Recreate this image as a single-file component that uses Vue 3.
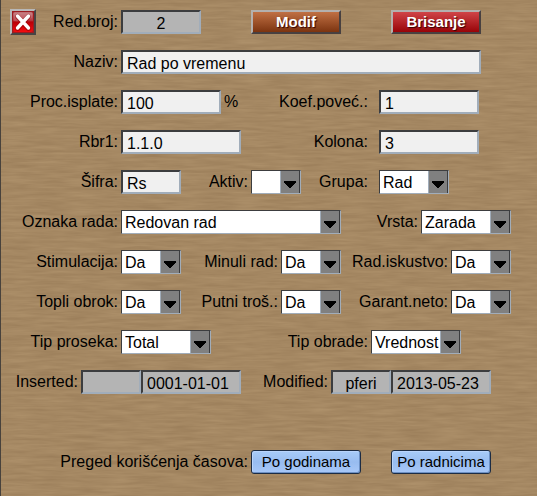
<script setup>
import { reactive } from 'vue'

const gap = (w) => ({ kind: 'gap', w })
const label = (w, text, target, wide = false) => ({ kind: 'label', w, text, target, wide })
const input = (w, id, extra = {}) => ({ kind: 'input', w, id, ...extra })
const select = (w, id, options) => ({ kind: 'select', w, id, options })
const button = (w, text, tone) => ({ kind: 'button', w, text, tone })

const values = reactive({
  redbroj: '2',
  naziv: 'Rad po vremenu',
  procenat: '100',
  koef: '1',
  rbr: '1.1.0',
  kolona: '3',
  sifra: 'Rs',
  aktiv: '',
  grupa: 'Rad',
  oznaka: 'Redovan rad',
  vrsta: 'Zarada',
  stimulacija: 'Da',
  minuli: 'Da',
  iskustvo: 'Da',
  topli: 'Da',
  putni: 'Da',
  garant: 'Da',
  prosek: 'Total',
  obrada: 'Vrednost',
  insertedBy: '',
  insertedOn: '0001-01-01',
  modifiedBy: 'pferi',
  modifiedOn: '2013-05-23'
})

const yesNo = ['Da', 'Ne']

// Cell widths are proportional shares of the row.
const rows = [
  [gap(10), { kind: 'close', w: 26 }, label(85, 'Red.broj:', 'redbroj'), input(80, 'redbroj', { locked: true, center: true }),
    gap(50), button(90, 'Modif', 'brown'), gap(50), button(90, 'Brisanje', 'red'), gap(56)],
  [label(121, 'Naziv:', 'naziv'), input(360, 'naziv'), gap(56)],
  [label(121, 'Proc.isplate:', 'procenat'), input(100, 'procenat'), { kind: 'unit', w: 30, text: '%' },
    label(128, 'Koef.poveć.:', 'koef', true), input(100, 'koef'), gap(58)],
  [label(121, 'Rbr1:', 'rbr'), input(120, 'rbr'), label(138, 'Kolona:', 'kolona', true), input(100, 'kolona'), gap(58)],
  [label(121, 'Šifra:', 'sifra'), input(60, 'sifra'), label(70, 'Aktiv:', 'aktiv'), select(50, 'aktiv', ['', ...yesNo]),
    label(78, 'Grupa:', 'grupa', true), select(70, 'grupa', ['Rad']), gap(88)],
  [label(121, 'Oznaka rada:', 'oznaka'), select(220, 'oznaka', ['Redovan rad']), label(80, 'Vrsta:', 'vrsta'),
    select(90, 'vrsta', ['Zarada']), gap(26)],
  [label(121, 'Stimulacija:', 'stimulacija'), select(60, 'stimulacija', yesNo), label(100, 'Minuli rad:', 'minuli'),
    select(60, 'minuli', yesNo), label(110, 'Rad.iskustvo:', 'iskustvo'), select(60, 'iskustvo', yesNo), gap(26)],
  [label(121, 'Topli obrok:', 'topli'), select(60, 'topli', yesNo), label(100, 'Putni troš.:', 'putni'),
    select(60, 'putni', yesNo), label(110, 'Garant.neto:', 'garant'), select(60, 'garant', yesNo), gap(26)],
  [label(121, 'Tip proseka:', 'prosek'), select(90, 'prosek', ['Total']), label(160, 'Tip obrade:', 'obrada'),
    select(90, 'obrada', ['Vrednost']), gap(76)],
  [label(81, 'Inserted:', 'insertedBy'), input(60, 'insertedBy', { locked: true, center: true }),
    input(100, 'insertedOn', { locked: true }), label(90, 'Modified:', 'modifiedBy'),
    input(60, 'modifiedBy', { locked: true, center: true }), input(100, 'modifiedOn', { locked: true }), gap(46)],
  [],
  [{ kind: 'caption', w: 251, text: 'Preged korišćenja časova:' }, button(110, 'Po godinama', 'blue'), gap(30),
    button(100, 'Po radnicima', 'blue'), gap(46)]
]
</script>

<template>
  <main class="panel">
    <svg class="wood" aria-hidden="true">
      <filter id="grain" x="0" y="0" width="100%" height="100%" color-interpolation-filters="sRGB">
        <feTurbulence type="fractalNoise" baseFrequency="0.03 0.34" numOctaves="3" seed="8" />
        <feColorMatrix
          values="0.09 0 0 0 0.600
                  0.09 0 0 0 0.486
                  0.08 0 0 0 0.345
                  0 0 0 0 1" />
      </filter>
      <rect width="100%" height="100%" filter="url(#grain)" />
    </svg>
    <form class="form" @submit.prevent>
      <div v-for="(row, r) in rows" :key="r" class="row">
        <div v-for="(cell, c) in row" :key="c" class="cell" :style="{ flexGrow: cell.w }">
          <label v-if="cell.kind === 'label'" class="text" :class="{ wide: cell.wide }" :for="cell.target">{{ cell.text }}</label>
          <span v-else-if="cell.kind === 'caption'" class="text">{{ cell.text }}</span>
          <span v-else-if="cell.kind === 'unit'" class="unit">{{ cell.text }}</span>
          <input
            v-else-if="cell.kind === 'input'"
            :id="cell.id"
            v-model="values[cell.id]"
            type="text"
            class="field"
            :class="{ locked: cell.locked, center: cell.center }"
            :readonly="cell.locked"
            :aria-label="cell.id === 'insertedOn' || cell.id === 'modifiedOn' ? cell.id : null" />
          <div v-else-if="cell.kind === 'select'" class="drop">
            <select :id="cell.id" v-model="values[cell.id]">
              <option v-for="o in cell.options" :key="o" :value="o">{{ o }}</option>
            </select>
            <span class="arrow">
              <svg width="14" height="9" viewBox="0 0 14 9" shape-rendering="crispEdges">
                <path d="M1 1h12v2h-1v1h-1v1h-1v1h-1v1h-1v1h-2v-1h-1v-1h-1v-1h-1v-1h-1v-1h-1z" />
              </svg>
            </span>
          </div>
          <button v-else-if="cell.kind === 'button'" type="button" class="btn" :class="cell.tone">{{ cell.text }}</button>
          <button v-else-if="cell.kind === 'close'" type="button" class="close" aria-label="Zatvori">
            <svg viewBox="0 0 22 22">
              <defs>
                <linearGradient id="closeFill" x1="0" y1="0" x2="0" y2="1">
                  <stop offset="0" stop-color="#c07478" />
                  <stop offset="0.42" stop-color="#b83840" />
                  <stop offset="0.5" stop-color="#b80008" />
                  <stop offset="1" stop-color="#f40c10" />
                </linearGradient>
              </defs>
              <rect width="22" height="22" fill="#9c1c20" />
              <rect x="1" y="1" width="20" height="20" rx="2" fill="url(#closeFill)" />
              <path d="M2 2h18v5q-9 5-18 3z" fill="#fff" opacity="0.12" />
              <path d="M5.500 5.500L16.500 17.500M16.500 5.500L5.500 17.500" stroke="#800" stroke-width="5" stroke-linecap="round" opacity="0.5" />
              <path d="M5.500 5L16.500 17M16.500 5L5.500 17" stroke="#fff" stroke-width="3.400" stroke-linecap="round" />
            </svg>
          </button>
        </div>
      </div>
    </form>
  </main>
</template>

<style>
body {
  margin: 0;
  background: #a38560;
}
</style>

<style scoped>
.panel {
  position: relative;
  min-height: 100vh;
  box-sizing: border-box;
  overflow: hidden;
  font-family: "Liberation Sans", Arial, sans-serif;
  font-size: 16px;
  color: #000;
}
.wood {
  position: absolute;
  inset: 0;
  width: 100%;
  height: 100%;
}
.panel::after {
  content: "";
  position: absolute;
  inset: 0 auto 0 0;
  width: 1px;
  background: #48423c;
}
.form {
  position: relative;
  display: flex;
  flex-direction: column;
  gap: 16px;
  padding: 10px 0;
}
.row {
  display: flex;
  height: 24px;
}
.cell {
  display: flex;
  flex: 1 1 0;
  min-width: 0;
}
.text {
  flex: 1;
  padding-right: 3px;
  text-align: right;
  line-height: 24px;
  white-space: nowrap;
}
.text.wide {
  padding-right: 11px;
}
.unit {
  padding-left: 3px;
  line-height: 24px;
}
.field {
  width: 100%;
  height: 24px;
  min-width: 0;
  box-sizing: border-box;
  margin: 0;
  padding: 3px 4px 0;
  border: 2px solid;
  border-color: #3c3d3f #a1adba #a1adba #3c3d3f;
  border-radius: 0;
  background: #f0f0f0;
  font: inherit;
  color: inherit;
  outline: none;
}
.field.locked {
  background: #b4b4b4;
}
.field.center {
  text-align: center;
}
.drop {
  display: flex;
  position: relative;
  width: 100%;
}
select {
  appearance: none;
  width: 100%;
  height: 24px;
  box-sizing: border-box;
  margin: 0;
  padding: 1px 20px 0 3px;
  border: 1px solid;
  border-color: #3c3d3f #a1adba #a1adba #3c3d3f;
  border-radius: 0;
  background: #fff;
  font: inherit;
  color: inherit;
  outline: none;
}
.arrow {
  position: absolute;
  top: 1px;
  right: 1px;
  bottom: 1px;
  width: 20px;
  box-sizing: border-box;
  display: flex;
  align-items: center;
  justify-content: center;
  padding-top: 4px;
  border-left: 1px solid #a1adba;
  border-right: 1px solid #3c3d3f;
  background: #808080;
  pointer-events: none;
}
.btn {
  width: 100%;
  height: 24px;
  box-sizing: border-box;
  margin: 0;
  padding: 0;
  font: inherit;
  white-space: nowrap;
}
.brown,
.red {
  padding-bottom: 1px;
  border: 2px solid;
  border-color: #b4b0ae #484040 #484040 #b4b0ae;
  color: #fff;
  font-size: 15px;
  font-weight: bold;
  text-shadow: 1px 1px 1px #300;
}
.brown {
  background: linear-gradient(#c07044, #7c3410);
}
.red {
  background: linear-gradient(#d04448, #980408);
}
.blue {
  padding-bottom: 1px;
  border: 1px solid #1c2c44;
  border-radius: 3px;
  background: linear-gradient(#a8ccf8, #98bcf0 50%, #a8c8f8);
  box-shadow: inset 1px 1px #b8d4fc, inset -1px -1px #6c90c4;
  color: #000;
  font-size: 15px;
}
.close {
  width: 26px;
  height: 26px;
  flex: none;
  box-sizing: border-box;
  margin: -1px 0;
  padding: 0;
  border: 2px solid;
  border-color: #b8b8b8 #484444 #484444 #b8b8b8;
  background: none;
}
.close svg {
  display: block;
  width: 100%;
  height: 100%;
}
</style>
